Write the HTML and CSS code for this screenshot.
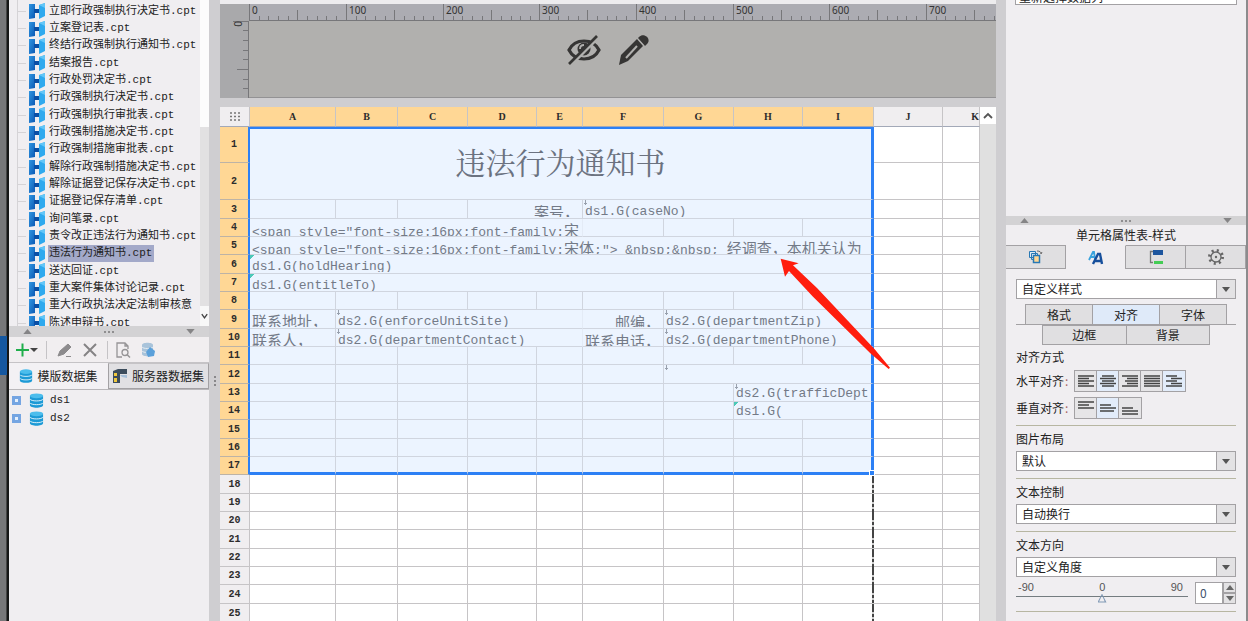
FILE: index.html
```
<!DOCTYPE html>
<html lang="zh-CN">
<head>
<meta charset="utf-8">
<title>报表设计器</title>
<link rel="stylesheet" href="styles.css">
</head>
<body>
<svg class="defs" width="0" height="0" aria-hidden="true">
  <defs>
    <linearGradient id="g1" x1="0" y1="0" x2="1" y2="1"><stop offset="0" stop-color="#2f96e2"/><stop offset="1" stop-color="#0b58b4"/></linearGradient>
    <symbol id="cpt" viewBox="0 0 16 16">
      <path d="M0 1h6v14l-6 1z" fill="url(#g1)"/>
      <path d="M5 6h6v4H5z" fill="#0a4fa6"/>
      <path d="M10 2l6-2v13l-6 3z" fill="#2fa9ee"/>
      <path d="M10 2l6-2v5z" fill="#62c6f8"/>
    </symbol>
    <symbol id="db" viewBox="0 0 16 16">
      <path d="M1 3v10c0 3.500 14 3.500 14 0V3z" fill="#1d9ad6"/>
      <ellipse cx="8" cy="3" rx="7" ry="2.600" fill="#4cbdec"/>
      <path d="M1 6.500c1 2.600 13 2.600 14 0M1 10.500c1 2.600 13 2.600 14 0" stroke="#e4f4fb" fill="none"/>
    </symbol>
    <symbol id="ticks" viewBox="0 0 97 17">
      <path d="M.5 0v17M10.500 12v5M19.500 12v5M29.500 12v5M39.500 12v5M48.500 6v11M58.500 12v5M68.500 12v5M77.500 12v5M87.500 12v5" stroke="#77777a"/>
    </symbol>
    <symbol id="down" viewBox="0 0 10 6"><path d="M0 0h10L5 6z" fill="currentColor"/></symbol>
    <symbol id="up" viewBox="0 0 10 6"><path d="M0 6h10L5 0z" fill="currentColor"/></symbol>
  </defs>
</svg>

<div class="app">
  <div class="backdrop"><span class="backdrop-tab"></span></div>

  <aside class="left">
    <div class="tree">
      <ul class="files">
        <li><svg><use href="#cpt"/></svg><span>立即行政强制执行决定书.cpt</span></li>
        <li><svg><use href="#cpt"/></svg><span>立案登记表.cpt</span></li>
        <li><svg><use href="#cpt"/></svg><span>终结行政强制执行通知书.cpt</span></li>
        <li><svg><use href="#cpt"/></svg><span>结案报告.cpt</span></li>
        <li><svg><use href="#cpt"/></svg><span>行政处罚决定书.cpt</span></li>
        <li><svg><use href="#cpt"/></svg><span>行政强制执行决定书.cpt</span></li>
        <li><svg><use href="#cpt"/></svg><span>行政强制执行审批表.cpt</span></li>
        <li><svg><use href="#cpt"/></svg><span>行政强制措施决定书.cpt</span></li>
        <li><svg><use href="#cpt"/></svg><span>行政强制措施审批表.cpt</span></li>
        <li><svg><use href="#cpt"/></svg><span>解除行政强制措施决定书.cpt</span></li>
        <li><svg><use href="#cpt"/></svg><span>解除证据登记保存决定书.cpt</span></li>
        <li><svg><use href="#cpt"/></svg><span>证据登记保存清单.cpt</span></li>
        <li><svg><use href="#cpt"/></svg><span>询问笔录.cpt</span></li>
        <li><svg><use href="#cpt"/></svg><span>责令改正违法行为通知书.cpt</span></li>
        <li class="active"><svg><use href="#cpt"/></svg><span>违法行为通知书.cpt</span></li>
        <li><svg><use href="#cpt"/></svg><span>送达回证.cpt</span></li>
        <li><svg><use href="#cpt"/></svg><span>重大案件集体讨论记录.cpt</span></li>
        <li><svg><use href="#cpt"/></svg><span>重大行政执法决定法制审核意</span></li>
        <li><svg><use href="#cpt"/></svg><span>陈述申辩书.cpt</span></li>
      </ul>
      <div class="tree-bar"><i></i><svg viewBox="0 0 10 20"><path d="M2 8l3 4 3-4" fill="none" stroke="#444" stroke-width="1.500"/></svg></div>
    </div>
    <div class="splitter"><svg><use href="#up"/></svg><b></b><svg><use href="#down"/></svg></div>
    <div class="tools">
      <button aria-label="添加" class="add"><svg width="22" height="16" viewBox="0 0 22 16"><path d="M0 8h13M6.500 1.500v13" stroke="#1fae4b" stroke-width="2"/><path d="M14 6h8l-4 4z" fill="#444"/></svg></button>
      <button aria-label="编辑"><svg width="16" height="16" viewBox="0 0 16 16"><path d="M1 14l2-5 8-7 3 3-7 7zM9 14.500h5" fill="#8d8b8d" stroke="#8d8b8d"/></svg></button>
      <button aria-label="删除"><svg width="14" height="16" viewBox="0 0 14 16"><path d="M1 2l12 12M13 2L1 14" stroke="#858385" stroke-width="2"/></svg></button>
      <button aria-label="预览" class="sep"><svg width="15" height="16" viewBox="0 0 15 16"><path d="M6 15H1V1h8l3 3v3M9 1v3h3" fill="none" stroke="#969496" stroke-width="1.300"/><circle cx="9" cy="10.500" r="3" fill="none" stroke="#969496" stroke-width="1.300"/><path d="M11 12.500l3 3" stroke="#969496" stroke-width="1.500"/></svg></button>
      <button aria-label="数据库"><svg width="16" height="16" viewBox="0 0 16 16"><path d="M1 3v9c0 3 11 3 11 0V3c0-3-11-3-11 0z" fill="#a9c3da"/><path d="M1 5c1 2 10 2 11 0M1 9c1 2 10 2 11 0" stroke="#e5ecf2" fill="none"/><path d="M9 5l5 4-1 5-6 1-2-5z" fill="#5ba0da"/></svg></button>
    </div>
    <div class="dstabs">
      <button class="on"><svg width="14" height="16"><use href="#db"/></svg>模版数据集</button>
      <button><svg width="15" height="15" viewBox="0 0 15 15"><path d="M0 2l5-2h9v5H7v9H0z" fill="#3c4c5c"/><path d="M1 4h3v3H1zM1 9h3v4H1z" fill="#f0c83c"/><path d="M7 6h7v3L9 8z" fill="#a6bfd8"/></svg>服务器数据集</button>
    </div>
    <ul class="datasets">
      <li><i></i><svg><use href="#db"/></svg>ds1</li>
      <li><i></i><svg><use href="#db"/></svg>ds2</li>
    </ul>
  </aside>

  <div class="gutter"><i></i></div>

  <main class="center">
    <section class="ruler">
      <div class="corner"></div>
      <div class="hruler">
        <span><svg><use href="#ticks"/></svg>0</span><span><svg><use href="#ticks"/></svg>100</span><span><svg><use href="#ticks"/></svg>200</span><span><svg><use href="#ticks"/></svg>300</span><span><svg><use href="#ticks"/></svg>400</span><span><svg><use href="#ticks"/></svg>500</span><span><svg><use href="#ticks"/></svg>600</span><span><svg><use href="#ticks"/></svg>700</span>
      </div>
      <div class="vruler"><svg width="29" height="77" viewBox="0 0 29 77"><path d="M13 .5h16M23 9.500h6M23 19.500h6M23 29.500h6M23 38.500h6M17 48.500h12M23 58.500h6M23 67.500h6M28.500 0v77" stroke="#77777a"/></svg><span>0</span></div>
      <div class="canvas">
        <svg width="34" height="32" viewBox="0 0 34 32"><path d="M2 16c6-12 24-12 30 0-6 12-24 12-30 0z" fill="none" stroke="#363534" stroke-width="3.200"/><circle cx="17" cy="15" r="6.500" fill="#363534"/><path d="M13 15c0-3 2-4 4-4" stroke="#b1b0ae" stroke-width="1.800" fill="none"/><path d="M4 31L32 3" stroke="#b1b0ae" stroke-width="3"/><path d="M2 30L30 2" stroke="#363534" stroke-width="2.600"/></svg>
        <svg width="32" height="32" viewBox="0 0 32 32"><path d="M1 31l2-10L19 5l6 7-15 15z" fill="#363534"/><path d="M21 3c5-5 13 2 8 7l-2 2-7-8z" fill="#363534"/><path d="M19.500 4.500l7 8" stroke="#b1b0ae"/><path d="M8 24L19 12" stroke="#b1b0ae" stroke-width="2"/></svg>
      </div>
    </section>

    <section class="sheet">
      <div class="grid">
        <table>
          <colgroup><col class="c0"><col class="ca"><col class="cb"><col class="cc"><col class="cd"><col class="ce"><col class="cf"><col class="cg"><col class="ch"><col class="ci"><col class="cj"><col></colgroup>
          <thead><tr><th class="all"><svg width="12" height="9" viewBox="0 0 12 9"><path d="M1 1h2M5 1h2M9 1h2M1 4.500h2M5 4.500h2M9 4.500h2M1 8h2M5 8h2M9 8h2" stroke="#777" stroke-width="1.500"/></svg></th><th>A</th><th>B</th><th>C</th><th>D</th><th>E</th><th>F</th><th>G</th><th>H</th><th>I</th><th class="off">J</th><th class="off k">K</th></tr></thead>
          <tbody class="sel">
            <tr class="tall"><th>1</th><td colspan="9" rowspan="2" class="title last">违法行为通知书</td><td></td><td></td></tr>
            <tr class="tall second"><th>2</th><td></td><td></td></tr>
            <tr><th>3</th><td></td><td></td><td></td><td colspan="2" class="right"><div>案号&#xFF0C;</div></td><td colspan="4" class="last"><div class="mark">ds1.G(caseNo)</div></td><td></td><td></td></tr>
            <tr><th>4</th><td colspan="5" class="open"><div>&lt;span style="font-size:16px;font-family:<b>宋</b></div></td><td></td><td></td><td></td><td class="last"></td><td></td><td></td></tr>
            <tr><th>5</th><td colspan="9" class="last"><div>&lt;span style="font-size:16px;font-family:<b>宋体</b>;"&gt; &amp;nbsp;&amp;nbsp; <b>经调查&#xFF0C;本机关认为</b></div></td><td></td><td></td></tr>
            <tr><th>6</th><td colspan="9" class="last"><div class="tag">ds1.G(holdHearing)</div></td><td></td><td></td></tr>
            <tr><th>7</th><td colspan="9" class="last"><div class="tag">ds1.G(entitleTo)</div></td><td></td><td></td></tr>
            <tr><th>8</th><td></td><td></td><td></td><td></td><td></td><td></td><td></td><td></td><td class="last"></td><td></td><td></td></tr>
            <tr><th>9</th><td><div><b>联系地址&#xFF0C;</b></div></td><td colspan="4" class="open"><div class="mark">ds2.G(enforceUnitSite)</div></td><td class="right"><div>邮编&#xFF0C;</div></td><td colspan="3" class="last"><div class="mark">ds2.G(departmentZip)</div></td><td></td><td></td></tr>
            <tr><th>10</th><td><div><b>联系人&#xFF0C;</b></div></td><td colspan="4" class="open"><div class="mark">ds2.G(departmentContact)</div></td><td class="right"><div>联系电话&#xFF0C;</div></td><td colspan="3" class="last"><div class="mark">ds2.G(departmentPhone)</div></td><td></td><td></td></tr>
            <tr><th>11</th><td></td><td></td><td></td><td></td><td></td><td></td><td></td><td></td><td class="last"></td><td></td><td></td></tr>
            <tr><th>12</th><td></td><td></td><td></td><td></td><td></td><td></td><td colspan="3" class="last"><div class="mark"></div></td><td></td><td></td></tr>
            <tr><th>13</th><td></td><td></td><td></td><td></td><td></td><td></td><td></td><td colspan="2" class="last"><div class="mark full">ds2.G(trafficDept</div></td><td></td><td></td></tr>
            <tr><th>14</th><td></td><td></td><td></td><td></td><td></td><td></td><td></td><td colspan="2" class="last"><div class="tag full">ds1.G(</div></td><td></td><td></td></tr>
            <tr><th>15</th><td></td><td></td><td></td><td></td><td></td><td></td><td></td><td></td><td class="last"></td><td></td><td></td></tr>
            <tr><th>16</th><td></td><td></td><td></td><td></td><td></td><td></td><td></td><td></td><td class="last"></td><td></td><td></td></tr>
            <tr class="end"><th>17</th><td></td><td></td><td></td><td></td><td></td><td></td><td></td><td></td><td class="last corner-cell"><i class="handle"></i></td><td></td><td></td></tr>
          </tbody>
          <tbody class="rest">
            <tr><th>18</th><td></td><td></td><td></td><td></td><td></td><td></td><td></td><td></td><td></td><td></td><td></td></tr>
            <tr><th>19</th><td></td><td></td><td></td><td></td><td></td><td></td><td></td><td></td><td></td><td></td><td></td></tr>
            <tr><th>20</th><td></td><td></td><td></td><td></td><td></td><td></td><td></td><td></td><td></td><td></td><td></td></tr>
            <tr><th>21</th><td></td><td></td><td></td><td></td><td></td><td></td><td></td><td></td><td></td><td></td><td></td></tr>
            <tr><th>22</th><td></td><td></td><td></td><td></td><td></td><td></td><td></td><td></td><td></td><td></td><td></td></tr>
            <tr><th>23</th><td></td><td></td><td></td><td></td><td></td><td></td><td></td><td></td><td></td><td></td><td></td></tr>
            <tr><th>24</th><td></td><td></td><td></td><td></td><td></td><td></td><td></td><td></td><td></td><td></td><td></td></tr>
            <tr><th>25</th><td></td><td></td><td></td><td></td><td></td><td></td><td></td><td></td><td></td><td></td><td></td></tr>
          </tbody>
        </table>
      </div>
      <div class="vbar"><svg width="16" height="17" viewBox="0 0 16 17"><path d="M4 11l4-4 4 4" fill="none" stroke="#555" stroke-width="1.800"/></svg></div>
      <svg class="arrow" width="112" height="112" viewBox="751 204 336 336"><path d="M753 206L807 220 790 226 862 294 1035 478 1081 533 1077 537 1022 490 850 320 778 243 766 260z" fill="#ff1d0e"/></svg>
    </section>
  </main>

  <div class="gutter slim"></div>

  <aside class="props">
    <div class="upper"><input class="cut" value="重新选择数据列" aria-label="数据列"></div>
    <div class="splitter"><svg><use href="#up"/></svg><b></b><svg><use href="#down"/></svg></div>
    <h2>单元格属性表-样式</h2>
    <div class="ptabs">
      <button aria-label="单元格元素"><svg width="15" height="14" viewBox="0 0 15 14"><path d="M1.500 1.500h6v6h-6zM3.500 3.500h6v6h-6z" fill="#dce9f4" stroke="#2878b4"/><path d="M5.500 5.500h6v7h-6z" fill="#ffd795" stroke="#2878b4" stroke-width="1.500"/><path d="M9 1c3 0 4 1 4 3l1-2" fill="none" stroke="#666"/></svg></button>
      <button class="on" aria-label="样式"><svg width="16" height="14" viewBox="0 0 16 14"><path d="M1 9l4-8h1l1 7M3 6h4" fill="none" stroke="#38a2dd" stroke-width="1.800"/><path d="M5 13l5-10h2l2 10M7 10h6" fill="none" stroke="#174f9c" stroke-width="2.400"/></svg></button>
      <button aria-label="条件属性"><svg width="14" height="14" viewBox="0 0 14 14"><path d="M4 1.500H1.500v11H4" fill="none" stroke="#777" stroke-width="1.300"/><path d="M4 0h10v5H4z" fill="#1d559e"/><path d="M5 11h9v3H5z" fill="#44cc55"/></svg></button>
      <button aria-label="设置"><svg width="16" height="16" viewBox="0 0 16 16"><circle cx="8" cy="8" r="6.500" fill="none" stroke="#666" stroke-width="3" stroke-dasharray="2 3.100"/><circle cx="8" cy="8" r="5" fill="#ddd" stroke="#666" stroke-width="1.300"/><circle cx="8" cy="8" r="1.200" fill="#666"/></svg></button>
    </div>
    <div class="form">
      <label class="pick"><select aria-label="样式类型"><option>自定义样式</option></select><i><svg><use href="#down"/></svg></i></label>
      <div class="styles">
        <div class="r1"><button>格式</button><button class="on">对齐</button><button>字体</button></div>
        <div class="r2"><button>边框</button><button>背景</button></div>
      </div>
      <div class="label">对齐方式</div>
      <div class="line"><span>水平对齐<em>:</em></span>
        <div class="group">
          <button aria-label="左对齐"><svg viewBox="0 0 16 12"><path d="M0 1h16M0 3.500h11M0 6h16M0 8.500h11M0 11h16"/></svg></button>
          <button class="on" aria-label="居中"><svg viewBox="0 0 16 12"><path d="M2 1h12M0 3.500h16M2 6h12M0 8.500h16M2 11h12"/></svg></button>
          <button aria-label="右对齐"><svg viewBox="0 0 16 12"><path d="M0 1h16M5 3.500h11M3 6h13M5 8.500h11M0 11h16"/></svg></button>
          <button aria-label="两端对齐"><svg viewBox="0 0 16 12"><path d="M0 1h16M0 3.500h16M0 6h16M0 8.500h16M0 11h16"/></svg></button>
          <button class="on" aria-label="分散对齐"><svg viewBox="0 0 16 12"><path d="M0 1h11M5 3.500h11M0 6h11M5 8.500h11M0 11h16"/></svg></button>
        </div>
      </div>
      <div class="line"><span>垂直对齐<em>:</em></span>
        <div class="group">
          <button aria-label="靠上"><svg viewBox="0 0 16 12"><path d="M0 0h16M0 3h11M0 6h16"/></svg></button>
          <button class="on" aria-label="垂直居中"><svg viewBox="0 0 16 12"><path d="M0 3h11M0 6h16M0 9h14"/></svg></button>
          <button aria-label="靠下"><svg viewBox="0 0 16 12"><path d="M0 6h11M0 9h16M0 12h16"/></svg></button>
        </div>
      </div>
      <div class="block"><label for="s1">图片布局</label><span class="pick"><select id="s1"><option>默认</option></select><i><svg><use href="#down"/></svg></i></span></div>
      <div class="block"><label for="s2">文本控制</label><span class="pick"><select id="s2"><option>自动换行</option></select><i><svg><use href="#down"/></svg></i></span></div>
      <div class="block"><label for="s3">文本方向</label><span class="pick"><select id="s3"><option>自定义角度</option></select><i><svg><use href="#down"/></svg></i></span>
        <div class="angle">
          <div class="slide"><div class="scale"><span>-90</span><span>0</span><span>90</span></div><input type="range" min="-90" max="90" value="0" aria-label="角度"></div>
          <div class="spin"><input value="0" aria-label="角度值"><div><button aria-label="增加"><svg><use href="#up"/></svg></button><button aria-label="减少"><svg><use href="#down"/></svg></button></div></div>
        </div>
      </div>
      <hr>
    </div>
  </aside>
</div>
</body>
</html>
```
FILE: styles.css
```
* { box-sizing: border-box; }
body { margin: 0; background: #cfced1; font: 12px/16px "Noto Sans CJK SC", sans-serif; color: #222; }
button, input, select { font: inherit; color: inherit; margin: 0; padding: 0; border-radius: 0; border: 1px solid #a3a1a4; background: none; }
ul { list-style: none; margin: 0; padding: 0; }
svg { display: block; flex: none; }
.defs { position: absolute; }
.app { display: flex; height: 100vh; overflow: hidden; }

.backdrop { flex: none; width: 9px; background: #777779; border-right: 2px solid #161616; box-shadow: inset -1px 0 #444; padding-top: 336px; }
.backdrop-tab { display: block; height: 39px; background: #1557a0; }

.left { flex: none; width: 200px; display: flex; flex-direction: column; background: #f0eef1; }
.tree { display: flex; height: 326px; overflow: hidden; }
.files { flex: 1; min-width: 0; overflow: hidden; padding-top: 2px; margin-left: 8px; border-left: 1px solid #d5d3d6; font: 11px/17px "Liberation Mono", "Noto Sans CJK SC", monospace; }
.files li { display: flex; align-items: center; height: 17px; white-space: nowrap; }
.files li:nth-child(3n+1) { height: 18px; }
.files li::before { content: ""; width: 8px; margin-right: 3px; border-top: 1px solid #d5d3d6; }
.files svg { width: 16px; height: 16px; margin-right: 3px; }
.files span { padding: 0 2px 0 1px; }
.files .active span { background: #a3a9c9; }
.tree-bar { width: 9px; display: flex; flex-direction: column; background: #e2e1e2; }
.tree-bar i { height: 127px; background: #fcfcfc; }
.tree-bar svg { margin-top: auto; width: 9px; height: 20px; background: #f8f8f8; }

.splitter { flex: none; display: flex; align-items: center; justify-content: space-between; height: 11px; padding: 0 14px; background: #d3d2d4; color: #858486; }
.splitter svg { width: 9px; height: 5px; }
.splitter b { width: 10px; border-top: 2px dotted #8f8e90; }

.tools { display: flex; align-items: center; gap: 10px; height: 25px; padding: 0 7px; background: #f1eef0; }
.tools button { border: 0; height: 18px; display: flex; align-items: center; }
.tools .add { padding-right: 8px; border-right: 1px solid #c5c3c6; }
.tools .sep { padding-left: 8px; border-left: 1px solid #c5c3c6; }
.dstabs { display: flex; height: 27px; border-top: 1px solid #c5c3c6; }
.dstabs button { flex: 1; display: flex; align-items: center; justify-content: center; gap: 4px; border: 1px solid #a3a1a4; border-top-color: #c5c3c6; background: #e1e0e3; white-space: nowrap; }
.dstabs .on { border: 0; background: #f3f1f4; }
.datasets { flex: 1; border-top: 1px solid #b9b7ba; padding-top: 2px; font: 11px/17px "Liberation Mono", monospace; }
.datasets li { display: flex; align-items: center; height: 17px; padding-left: 3px; gap: 8px; }
.datasets li + li { height: 18px; }
.datasets i { width: 9px; height: 9px; border: 3px solid #75a5e2; background: #e6f0fc; }
.datasets svg { width: 15px; height: 15px; margin: 0 -2px 0 0; }

.gutter { flex: none; width: 11px; display: flex; align-items: center; justify-content: center; padding-top: 140px; background: #cfced1; }
.gutter i { height: 10px; border-left: 2px dotted #88878a; }
.slim { width: 10px; }

.center { flex: 1; min-width: 0; display: flex; flex-direction: column; gap: 9px; }
.ruler { display: grid; grid-template-columns: 29px 1fr; grid-template-rows: 17px 77px; border-top: 4px solid #edecee; color: #333; font: 10px/12px "Noto Sans", sans-serif; }
.corner, .vruler { background: #a9a9ab; }
.hruler { display: flex; overflow: hidden; background: #acacb2; border-bottom: 1px solid #77777a; }
.hruler span { flex: none; width: 97px; display: flex; }
.hruler span:nth-child(3n) { width: 96px; }
.hruler svg { width: 97px; height: 17px; margin-right: -94px; }
.vruler { display: grid; }
.vruler svg, .vruler span { grid-area: 1 / 1; }
.vruler span { writing-mode: vertical-rl; padding-left: 12px; justify-self: start; }
.canvas { display: flex; justify-content: center; gap: 17px; padding: 13px 29px 0 0; background: #b1b0ae; border-bottom: 1px solid #939294; }

.sheet { position: relative; flex: 1; min-height: 0; display: flex; background: #fff; overflow: hidden; }
.grid { flex: 1; min-width: 0; overflow: hidden; }
.vbar { width: 16px; background: #e0e0e0; }
.vbar svg { background: #fff; }
table { width: 100%; table-layout: fixed; border-spacing: 0; }
.c0 { width: 30px; } .ca { width: 86px; } .cb { width: 62px; } .cc { width: 70px; } .cd { width: 69px; } .ce { width: 46px; }
.cf { width: 81px; } .cg { width: 70px; } .ch { width: 69px; } .ci { width: 71px; } .cj { width: 69px; }
th, td { padding: 0; height: 18px; border: solid #c6c4c6; border-width: 0 1px 1px 0; vertical-align: top; }
th { background: #f0eef0; font: bold 10px/17px "Liberation Mono", monospace; vertical-align: middle; color: #2c2c2c; }
thead th { height: 20px; background: #ffd795; border-bottom-color: #a3a9b8; font-family: "Liberation Serif", serif; line-height: 19px; }
thead th.off, thead th.all { background: #f0eef0; }
thead th.k { text-align: right; }
.all svg { margin: auto; }
.sel tr:nth-child(3n) > * { height: 19px; }
.rest tr:nth-child(3n+1) > *, .rest tr:nth-child(8) > * { height: 19px; }
.sel tr.tall > * { height: 36px; }
.sel tr.second > * { height: 37px; }
.sel th { background: #ffd795; border-color: #bdb3a6; border-right: 2px solid #2c80f5; }
.sel td { background: #ecf4ff; border-color: #d0d5df; }
.sel .last { border-right: 3px solid #2c80f5; }
.sel .last ~ td, .sel .second td { background: #fff; border-color: #c6c4c6; }
.sel td.title { border-top: 2px solid #2c80f5; padding-bottom: 6px; vertical-align: middle; text-align: center; font: 30px/40px "Noto Serif CJK SC", "Noto Sans CJK SC", sans-serif; color: #6b7280; }
.sel .open { border-right-color: #e4ebf6; }
.sel .end td { border-bottom: 3px solid #2c80f5; }
.sel .end .last ~ td { border-bottom: 1px solid #c6c4c6; }
td div { height: 17px; padding: 3px 0 0 2px; overflow: hidden; white-space: nowrap; font: 13px/18px "Liberation Mono", "Noto Sans CJK SC", monospace; color: #737a87; }
td b { font: 15px/16px "Noto Sans CJK TC", sans-serif; }
td.right div { text-align: right; padding-right: 3px; font: 15px/18px "Noto Sans CJK TC", sans-serif; }
td div.full { padding-top: 1px; }
.mark { background: linear-gradient(#98a0ad, #98a0ad) 2px 0 / 1px 5px no-repeat, linear-gradient(#98a0ad, #98a0ad) 1px 3px / 3px 1px no-repeat; }
.tag { background: linear-gradient(135deg, #4cc9b8 3px, transparent 3px); }
.corner-cell { position: relative; }
.handle { position: absolute; right: -4px; bottom: -4px; width: 6px; height: 6px; background: #2c80f5; border: 1px solid #fff; }
.rest td:nth-child(10) { border-right: 2px solid; border-image: repeating-linear-gradient(#444 0 8px, #ccc 8px 10px, #444 10px 12px, #ccc 12px 14px, #444 14px 16px, #ccc 16px 18px) 2; border-bottom-width: 0; background: linear-gradient(#c6c4c6, #c6c4c6) 0 100% / 100% 1px no-repeat; }
.arrow { position: absolute; left: 560px; top: 151px; }

.props { flex: none; width: 242px; display: flex; flex-direction: column; background: #f0eef1; border-right: 2px solid #8c8b8d; }
.upper { height: 216px; padding: 0 9px; display: flex; align-items: flex-start; }
.cut { width: 100%; height: 18px; margin-top: -13px; padding: 0 3px; background: #fff; }
.props .splitter { height: 9px; }
h2 { margin: 0; font-weight: 400; font-size: 12px; line-height: 20px; text-align: center; }
.ptabs { display: flex; height: 24px; }
.ptabs button { flex: 1; display: flex; align-items: center; justify-content: center; background: #e0dfe1; border-left-width: 0; }
.ptabs .on { background: #f0eef1; border-bottom: 0; border-top-color: #f0eef1; }
.form { display: flex; flex-direction: column; padding: 10px 10px 0 10px; }
.pick { display: flex; height: 20px; border: 1px solid #a3a1a4; background: #fff; }
.pick select { flex: 1; appearance: none; border: 0; padding: 0 5px; line-height: 18px; }
.pick i { width: 19px; display: flex; align-items: center; justify-content: center; background: #e3e2e4; border-left: 1px solid #a3a1a4; color: #555; }
.pick svg { width: 8px; height: 5px; }
.styles { padding: 5px 0 3px; }
.r1, .r2 { display: flex; padding: 0 9px; }
.r1 { border-bottom: 1px solid #a3a1a4; }
.r2 { padding: 0 26px; }
.styles button { flex: 1; height: 20px; line-height: 18px; background: #e0dfe1; }
.styles button + button { border-left: 0; }
.styles .r1 button { border-bottom: 0; }
.styles .on { background: #dfeaf9; }
.label { line-height: 18px; margin-bottom: 4px; }
.line { display: flex; align-items: center; height: 22px; margin-bottom: 5px; }
.line span { width: 58px; }
.line em { font-style: normal; color: #a66; padding-left: 1px; }
.group { display: flex; border: 1px solid #a3a1a4; }
.group button { width: 22px; height: 20px; border-width: 0 1px 0 0; display: flex; align-items: center; justify-content: center; background: #e6e5e7; }
.group button:last-child { border-right: 0; }
.group .on { background: #e2ecfa; }
.group svg { width: 16px; height: 12px; overflow: visible; stroke: #444; stroke-width: 1.4; }
.block { border-top: 1px solid #b7b6a2; margin-bottom: 7px; }
.line + .block { margin-top: 1px; }
.block > label { display: block; line-height: 18px; padding: 4px 0 3px; }
.angle { display: flex; gap: 7px; padding-top: 5px; }
.slide { flex: 1; min-width: 0; }
.scale { display: flex; justify-content: space-between; padding: 0 5px 0 2px; font: 11px/10px "Liberation Sans", sans-serif; color: #555; }
.slide input { display: block; appearance: none; width: 100%; height: 12px; border: 0; background: linear-gradient(#747c80, #747c80) 0 4px / 100% 1px no-repeat; }
.slide input::-webkit-slider-thumb { appearance: none; width: 9px; height: 9px; background: #8099b5; clip-path: polygon(50% 0, 100% 100%, 0 100%, 0 98%, 20% 88%, 80% 88%, 50% 22%, 18% 88%, 0 98%); }
.spin { display: flex; width: 41px; height: 22px; }
.spin input { width: 28px; padding-left: 4px; background: #fff; color: #41526e; }
.spin div { flex: 1; display: flex; flex-direction: column; }
.spin button { flex: 1; display: flex; align-items: center; justify-content: center; background: #e3e2e4; color: #666; }
.spin svg { width: 8px; height: 5px; }
hr { width: 100%; margin: 0; border: 0; border-top: 1px solid #b7b6a2; }
```
